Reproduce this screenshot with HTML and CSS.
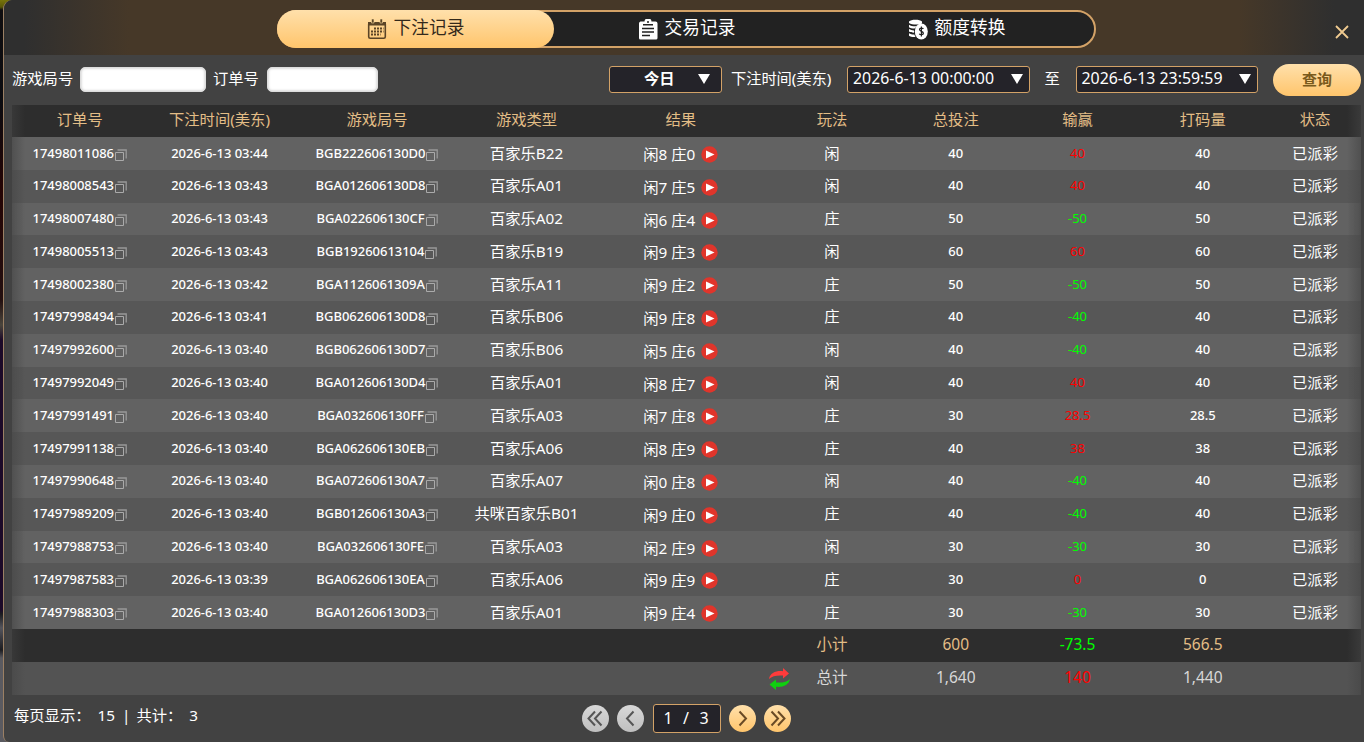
FILE: index.html
```html
<!DOCTYPE html>
<html lang="zh-CN">
<head>
    <meta charset="utf-8">
    <title>下注记录</title>
    <link rel="stylesheet" href="styles.css">
</head>
<body>
    <svg class="sprite" width="0" height="0">
        <symbol id="copy" viewBox="0 0 12 12">
            <path d="M.5 3.500h8v8h-8z" fill="none" stroke="#aaa"/>
            <path d="M2.500 1h8.700v8.500" fill="none" stroke="#999" stroke-width="1.300"/>
        </symbol>
        <symbol id="play" viewBox="0 0 17 17">
            <circle cx="8.500" cy="8.500" r="8.200" fill="#e0352b"/>
            <path d="M5 4.500l8.500 4-8.500 4z" fill="#fff"/>
        </symbol>
    </svg>

    <div class="panel">
        <div class="header">
            <div class="tabs">
                <div class="tab active">
                    <svg width="20" height="21" viewBox="0 0 20 21">
                        <rect x="1.700" y="3.700" width="16.600" height="15.600" rx="1.500" fill="none" stroke="#5b4426" stroke-width="1.600"/>
                        <path d="M1 3h18v3.500H1z" fill="#5b4426"/>
                        <path d="M4.500 0h2.500v4h-2.500zM13 0h2.500v4H13z" fill="#5b4426" stroke="#ffdda0" stroke-width=".6"/>
                        <path d="M7 9.500h9.500M4 12.500h12.500M4 15.500h9.500" stroke="#5b4426" stroke-width="2" stroke-dasharray="2 1"/>
                    </svg>
                    <span>下注记录</span>
                </div>
                <div class="tab">
                    <svg width="20" height="21" viewBox="0 0 20 21">
                        <path d="M2.500 2.500h4a3.500 3 0 0 1 7 0h4a2 2 0 0 1 2 2V19a1.500 1.500 0 0 1-1.500 1.500H2.500A1.500 1.500 0 0 1 1 19V4.500a2 2 0 0 1 1.500-2z" fill="#fff"/>
                        <circle cx="10" cy="3" r="1" fill="#222"/>
                        <path d="M5 5.700h10M4 9.500h12M4 13h12M4 16.500h8" stroke="#222" stroke-width="1.500"/>
                    </svg>
                    <span>交易记录</span>
                </div>
                <div class="tab">
                    <svg width="20" height="21" viewBox="0 0 20 21">
                        <path d="M1 2.500C3 .2 12 .2 14 2.500v2C11 6 4 6 1 4zM1 5.700c2 1.400 5 1.800 8 1.500L6.500 9.500C4 9.500 2 9.200 1 8.300zM1 10c1.500 .9 3 1.300 5 1.400v2.300C4 13.700 2 13.300 1 12.500zM1 14.200c1.500 .9 3 1.300 5.300 1.300l1.200 2.500C5 18.200 2 17.800 1 16.700z" fill="#fff"/>
                        <ellipse cx="13.300" cy="12.500" rx="6.500" ry="8" fill="#fff"/>
                        <path d="M15.300 10c-.3-1-3.800-1.300-3.800.6 0 2 3.900 1.600 3.900 3.700 0 1.800-3.500 1.800-4.100.4M13.400 7.500v10" fill="none" stroke="#222" stroke-width="1.200"/>
                    </svg>
                    <span>额度转换</span>
                </div>
            </div>
            <svg class="close" width="14" height="14" viewBox="0 0 14 14">
                <path d="M1 1l12 12M13 1L1 13" stroke="#f0cb90" stroke-width="1.800"/>
            </svg>
        </div>

        <div class="filter">
            <label class="round">游戏局号</label>
            <input class="txt" type="text">
            <label class="order">订单号</label>
            <input class="txt short" type="text">
            <div class="select day"><b>今日</b><i class="arrow"></i></div>
            <label class="time">下注时间(美东)</label>
            <div class="select date"><span>2026-6-13 00:00:00</span><i class="arrow"></i></div>
            <label class="to">至</label>
            <div class="select date"><span>2026-6-13 23:59:59</span><i class="arrow"></i></div>
            <button class="search">查询</button>
        </div>

        <div class="grid">
            <div class="row head">
                <div>订单号</div><div>下注时间(美东)</div><div>游戏局号</div><div>游戏类型</div><div>结果</div><div>玩法</div><div>总投注</div><div>输赢</div><div>打码量</div><div>状态</div>
            </div>
            <div id="list"></div>
            <div class="row subtotal">
                <div></div><div></div><div></div><div></div><div></div><div>小计</div><div>600</div><div class="lose">-73.5</div><div>566.5</div><div></div>
            </div>
            <div class="row total">
                <div></div><div></div><div></div><div></div><div></div>
                <div class="sum">
                    <svg width="21" height="22" viewBox="0 0 21 22">
                        <path d="M0 11C1 5 7 2.500 14 3.200V0l6 5.500-6 5V7.500C8 7 3 8 0 11z" fill="#ff3b3b"/>
                        <path d="M21 11c-1 6-7 8.500-14 7.800V22l-6.500-5.500 6.500-5v3c6 .5 11-.5 14-3.500z" fill="#0fd00f"/>
                    </svg>
                    <span>总计</span>
                </div>
                <div>1,640</div><div class="win">140</div><div>1,440</div><div></div>
            </div>
        </div>

        <div class="footer">
            <div class="info"><span>每页显示：</span><span class="size">15</span><span class="bar">|</span><span>共计：</span><span class="count">3</span></div>
            <div class="pager">
                <div class="btn off"><svg width="27" height="27" viewBox="0 0 27 27"><path d="M13 6.500l-6.500 7 6.500 7M19.500 6.500l-6.500 7 6.500 7"/></svg></div>
                <div class="btn off"><svg width="27" height="27" viewBox="0 0 27 27"><path d="M16.500 6.500l-6.500 7 6.500 7"/></svg></div>
                <div class="page"><span>1</span><span>/</span><span>3</span></div>
                <div class="btn"><svg width="27" height="27" viewBox="0 0 27 27"><path d="M10.500 6.500l6.500 7-6.500 7"/></svg></div>
                <div class="btn"><svg width="27" height="27" viewBox="0 0 27 27"><path d="M7.500 6.500l6.500 7-6.500 7M14 6.500l6.500 7-6.500 7"/></svg></div>
            </div>
        </div>
    </div>

    <script>
        // order, time, round, type, result, play, bet, win/loss, turnover
        var records = [
            ['17498011086', '03:44', 'BGB222606130D0', '百家乐B22', '闲8 庄0', '闲', '40', '40', '40'],
            ['17498008543', '03:43', 'BGA012606130D8', '百家乐A01', '闲7 庄5', '闲', '40', '40', '40'],
            ['17498007480', '03:43', 'BGA022606130CF', '百家乐A02', '闲6 庄4', '庄', '50', '-50', '50'],
            ['17498005513', '03:43', 'BGB19260613104', '百家乐B19', '闲9 庄3', '闲', '60', '60', '60'],
            ['17498002380', '03:42', 'BGA1126061309A', '百家乐A11', '闲9 庄2', '庄', '50', '-50', '50'],
            ['17497998494', '03:41', 'BGB062606130D8', '百家乐B06', '闲9 庄8', '庄', '40', '-40', '40'],
            ['17497992600', '03:40', 'BGB062606130D7', '百家乐B06', '闲5 庄6', '闲', '40', '-40', '40'],
            ['17497992049', '03:40', 'BGA012606130D4', '百家乐A01', '闲8 庄7', '闲', '40', '40', '40'],
            ['17497991491', '03:40', 'BGA032606130FF', '百家乐A03', '闲7 庄8', '庄', '30', '28.5', '28.5'],
            ['17497991138', '03:40', 'BGA062606130EB', '百家乐A06', '闲8 庄9', '庄', '40', '38', '38'],
            ['17497990648', '03:40', 'BGA072606130A7', '百家乐A07', '闲0 庄8', '闲', '40', '-40', '40'],
            ['17497989209', '03:40', 'BGB012606130A3', '共咪百家乐B01', '闲9 庄0', '庄', '40', '-40', '40'],
            ['17497988753', '03:40', 'BGA032606130FE', '百家乐A03', '闲2 庄9', '闲', '30', '-30', '30'],
            ['17497987583', '03:39', 'BGA062606130EA', '百家乐A06', '闲9 庄9', '庄', '30', '0', '0'],
            ['17497988303', '03:40', 'BGA012606130D3', '百家乐A01', '闲9 庄4', '庄', '30', '-30', '30']
        ];
        var copy = '<svg class="copy" width="12" height="12"><use href="#copy"/></svg>';
        var play = '<svg class="play" width="17" height="17"><use href="#play"/></svg>';

        document.getElementById('list').innerHTML = records.map(function (r) {
            return '<div class="row">' +
                '<div class="num">' + r[0] + copy + '</div>' +
                '<div class="num">2026-6-13 ' + r[1] + '</div>' +
                '<div class="num">' + r[2] + copy + '</div>' +
                '<div>' + r[3] + '</div>' +
                '<div class="result">' + r[4] + play + '</div>' +
                '<div>' + r[5] + '</div>' +
                '<div class="num">' + r[6] + '</div>' +
                '<div class="num ' + (r[7] < 0 ? 'lose' : 'win') + '">' + r[7] + '</div>' +
                '<div class="num">' + r[8] + '</div>' +
                '<div>已派彩</div></div>';
        }).join('');
    </script>
</body>
</html>
```
FILE: styles.css
```css
* {
    box-sizing:border-box;
}

body {
    margin:0;
    height:742px;
    overflow:hidden;
    padding-left:3px;
    background:linear-gradient(#77740a 0, #5a5808 7px, #100e10 10px, #0c0c10 100px, #250505 190px, #241010 300px, #4a453c 325px, #1c0a28 340px, #1c0a28 610px, #1c1c20 614px, #55555c 628px, #1c1c20 650px, #5a5a60 658px);
    font-family:"Noto Sans", "Noto Sans CJK SC", sans-serif;
    font-size:15.3px;
    color:#fff;
}

.sprite {
    position:absolute;
}

.panel {
    height:742px;
    overflow:hidden;
    border-left:1px solid #9b8064;
    border-radius:9px 0 0 6px;
    background:#424242;
}

.header {
    display:flex;
    align-items:flex-start;
    height:55px;
    padding:10px 15px 0 273px;
    background:linear-gradient(90deg, #2f2f2f 20px, #463828 125px, #463828 1235px, #2f2f2f 1330px);
}

.tabs {
    display:flex;
    width:819px;
    height:38px;
    border:2px solid #d3a267;
    border-radius:19px;
    background:#222;
}

.tab {
    display:flex;
    flex:1;
    align-items:center;
    justify-content:center;
    gap:7px;
    height:34px;
    padding-right:5px;
    font-size:17.7px;
    line-height:32px;
}
    .tab span {
        margin-top:-4px;
    }

.tab.active {
    flex:0 0 277px;
    height:38px;
    margin:-2px 0 0 -2px;
    padding-right:0;
    border-radius:19px;
    background:linear-gradient(#ffe0ab, #ffc56c);
    color:#33291b;
}

.close {
    margin:15px 0 0 auto;
}

.filter {
    display:flex;
    align-items:center;
    height:50px;
    padding:0 3px 2px 8px;
    white-space:nowrap;
}
    .filter label {
        margin-top:-5px;
    }
    .filter .round {
        width:68px;
    }
    .filter .order {
        width:46px;
        margin:-5px 8px 0 7px;
    }
    .filter .time {
        width:102px;
        margin:-5px 14px 0 9px;
        letter-spacing:-.1px;
    }
    .filter .to {
        width:16px;
        margin:-5px 15px 0;
    }

.txt {
    width:126px;
    height:25px;
    border:1px solid #ddd;
    border-radius:5px;
    background:#fff;
    box-shadow:inset 0 0 3px #bbb;
}

.short {
    width:111px;
}

.select {
    display:flex;
    align-items:center;
    justify-content:space-between;
    height:27px;
    border:1px solid #d3a267;
    border-radius:3px;
    background:#242329;
}

.day {
    width:113px;
    margin-left:auto;
    padding:0 11px 0 34px;
}
    .day b {
        margin-top:-4px;
    }

.date {
    width:182.500px;
    padding:0 6px 0 5px;
}
    .date span {
        margin-top:-3px;
        font-size:15.900px;
    }

.arrow {
    border:6px solid transparent;
    border-top:10px solid #fff;
    border-bottom:0;
}

.search {
    width:88px;
    height:32px;
    margin:2px 0 0 15px;
    padding:0 0 4px;
    border:0;
    border-radius:16px;
    background:linear-gradient(#ffe0ab, #ffc56c);
    color:#7a5a1c;
    font:bold 15px "Noto Sans CJK SC", sans-serif;
}

.grid {
    width:1349px;
    margin-left:8px;
}

.row {
    display:grid;
    grid-template-columns:135.500px 144px 171px 128px 180.500px 122px 125.500px 118px 132.500px 92px;
    height:32.8px;
    padding-bottom:4.6px;
    line-height:28.2px;
    text-align:center;
    white-space:nowrap;
    background:linear-gradient(90deg, #4c4c4c, transparent 13px, transparent 1335px, #4c4c4c), #575757;
}
    .row:nth-child(odd) {
        background:linear-gradient(90deg, #505050, transparent 13px, transparent 1335px, #505050), #626262;
    }

.row > div {
    display:flex;
    align-items:center;
    justify-content:center;
}

.grid .head, .grid .subtotal {
    background:linear-gradient(90deg, #383838, transparent 13px, transparent 1335px, #3a3a3a), #2d2d2d;
    color:#e3bd86;
}

.grid .head {
    height:32px;
    padding-bottom:3px;
}

.grid .total {
    background:linear-gradient(90deg, #4b4b4b, transparent 13px, transparent 1335px, #4a4a4a), #535353;
    color:#d8d8d8;
}

.grid .subtotal, .grid .total {
    padding-bottom:2px;
    font-size:15.500px;
}

.row .num {
    font-size:13px;
    font-weight:500;
    letter-spacing:-.03px;
}

.row .result {
    padding-top:3px;
}

.copy {
    margin:4px 0 0 1px;
}

.play {
    margin:1px 0 0 6px;
}

.grid .win {
    color:#f00;
    font-weight:400;
}

.grid .lose {
    color:#0f0;
    font-weight:400;
}

/* the swap icon sits left of the centred label */
.row .sum svg {
    margin:3px 26px 0 -47px;
}

.footer {
    display:flex;
    height:47px;
    padding-left:10px;
}

.info {
    display:flex;
    width:568px;
    line-height:41px;
}
    .info .size {
        margin-left:7px;
    }
    .info .bar {
        margin:0 6px 0 7px;
    }
    .info .count {
        margin-left:7px;
    }

.pager {
    display:flex;
    align-items:center;
    gap:8.300px;
}

.btn {
    width:27px;
    height:27px;
    border-radius:50%;
    background:linear-gradient(#ffe0ab, #ffc56c);
}
    .btn path {
        fill:none;
        stroke:#694a25;
        stroke-width:2;
    }

.off {
    background:linear-gradient(#d8d8d8, #bfbfbf);
}
    .off path {
        stroke:#555;
    }

.page {
    display:flex;
    justify-content:space-between;
    width:68px;
    height:29px;
    padding:0 11px 0 10px;
    border:1px solid #d3a267;
    border-radius:3px;
    background:#242329;
    font-size:16px;
    line-height:26px;
}
```
